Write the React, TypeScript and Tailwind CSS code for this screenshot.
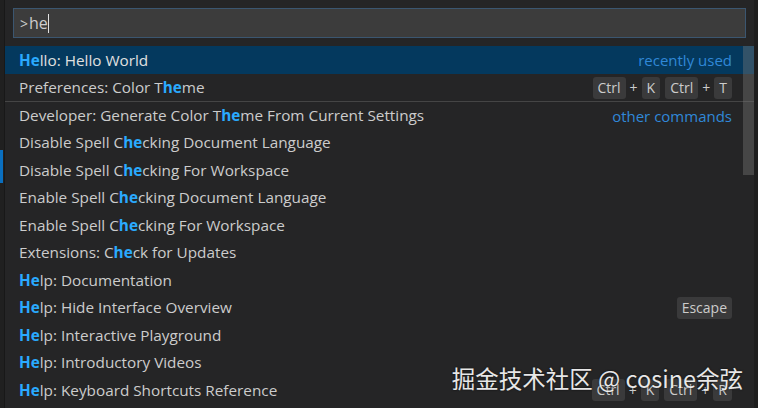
import React from 'react';

type Part = { t: string; hl?: boolean };
type Row = { parts: Part[]; label?: string; keys?: string[][]; sep?: boolean };

const h = (t: string): Part => ({ t, hl: true });
const p = (t: string): Part => ({ t });

const ROWS: Row[] = [
  { parts: [h('He'), p('llo: Hello World')], label: 'recently used' },
  { parts: [p('Preferences: Color T'), h('he'), p('me')], keys: [['Ctrl', 'K'], ['Ctrl', 'T']] },
  { parts: [p('Developer: Generate Color T'), h('he'), p('me From Current Settings')], label: 'other commands', sep: true },
  { parts: [p('Disable Spell C'), h('he'), p('cking Document Language')] },
  { parts: [p('Disable Spell C'), h('he'), p('cking For Workspace')] },
  { parts: [p('Enable Spell C'), h('he'), p('cking Document Language')] },
  { parts: [p('Enable Spell C'), h('he'), p('cking For Workspace')] },
  { parts: [p('Extensions: C'), h('he'), p('ck for Updates')] },
  { parts: [h('He'), p('lp: Documentation')] },
  { parts: [h('He'), p('lp: Hide Interface Overview')], keys: [['Escape']] },
  { parts: [h('He'), p('lp: Interactive Playground')] },
  { parts: [h('He'), p('lp: Introductory Videos')] },
  { parts: [h('He'), p('lp: Keyboard Shortcuts Reference')], keys: [['Ctrl', 'K'], ['Ctrl', 'R']] },
];

function Keys({ chords }: { chords: string[][] }) {
  return (
    <div className="flex items-center gap-[5px]">
      {chords.map((chord, i) => (
        <div key={i} className="flex items-center gap-[4px]">
          {chord.map((k, j) => (
            <React.Fragment key={j}>
              {j > 0 && <span className="text-[14px] text-[#cccccc]">+</span>}
              <span className="h-[22px] px-[5px] rounded-[3px] bg-[#3a3a3b] text-[14px] leading-[22px] text-[#cccccc]">
                {k}
              </span>
            </React.Fragment>
          ))}
        </div>
      ))}
    </div>
  );
}

export default function App() {
  return (
    <div
      className="relative w-[758px] h-[408px] overflow-hidden bg-[#1e1e1e] flex"
      style={{ fontFamily: '"Open Sans", "Noto Sans", sans-serif' }}
    >
      {/* left edge of the editor behind */}
      <div className="relative w-[5px] shrink-0 bg-[#202020] border-r border-[#181818]">
        <div className="absolute left-0 top-[150px] w-[3px] h-[33px] bg-[#0a6fbf]" />
      </div>

      {/* quick pick */}
      <div className="relative w-[749px] shrink-0 bg-[#252526] pt-[8px]">
        <div className="px-[8px]">
          <div className="h-[30px] bg-[#3c3c3c] border border-[#3b5670] flex items-center pl-[6px] text-[16px] text-[#cccccc]">
            <span className="text-[14px] mr-[1px]">&gt;</span>
            <span>he</span>
            <span className="w-[1px] h-[19px] bg-[#e0e0e0]" />
          </div>
        </div>

        <div className="mt-[8px]">
          {ROWS.map((r, i) => (
            <div
              key={i}
              className={`h-[27.5px] flex items-center justify-between pl-[14px] pr-[22px] pt-[1px] text-[15.3px] ${
                i === 0 ? 'bg-[#04395e] text-[#e0e0e0]' : 'text-[#cccccc]'
              } ${r.sep ? 'border-t border-[#454545]' : ''}`}
            >
              <span className="whitespace-nowrap">
                {r.parts.map((pt, j) =>
                  pt.hl ? (
                    <span key={j} className="font-bold text-[#2aaaff]">
                      {pt.t}
                    </span>
                  ) : (
                    <span key={j}>{pt.t}</span>
                  )
                )}
              </span>
              {r.label && <span className="text-[15px] text-[#3088d8]">{r.label}</span>}
              {r.keys && <Keys chords={r.keys} />}
            </div>
          ))}
        </div>

        {/* scrollbar */}
        <div className="absolute right-0 top-[46px] w-[11px] h-[129px] bg-[#79797966]" />
      </div>

      <div className="flex-1 bg-[#1e1e1e]" />

      {/* watermark */}
      <div
        className="absolute right-[15px] bottom-[12px] text-[23.5px] text-white/90 whitespace-nowrap"
        style={{
          fontFamily: '"Noto Sans CJK SC", "Noto Sans", sans-serif',
          textShadow: '0 0 2px rgba(0,0,0,0.8)',
        }}
      >
        掘金技术社区 @ cosine余弦
      </div>
    </div>
  );
}
